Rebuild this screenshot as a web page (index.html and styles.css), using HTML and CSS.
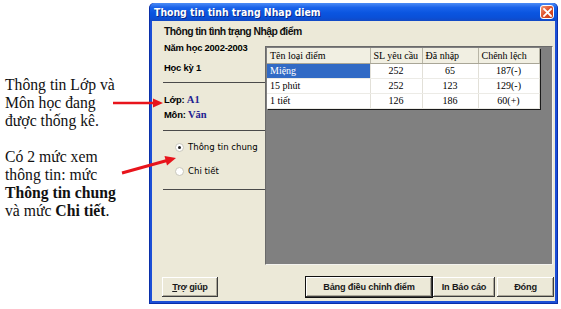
FILE: index.html
```html
<!DOCTYPE html>
<html lang="vi">
<head>
<meta charset="utf-8">
<title>Thong tin tinh trang Nhap diem</title>
<link rel="stylesheet" href="styles.css">
</head>
<body>
<div class="page">
  <div class="notes">
    <p class="note note-a">Thông tin Lớp và<br>Môn học đang<br>được thống kê.</p>
    <p class="note note-b">Có 2 mức xem<br>thông tin: mức<br><b>Thông tin chung</b><br>và mức <b>Chi tiết</b>.</p>
  </div>

  <div class="window">
    <div class="titlebar">
      <span class="title">Thong tin tinh trang Nhap diem</span>
      <span class="close">
        <svg width="9" height="9" viewBox="0 0 9 9"><path d="M1 1L8 8M8 1L1 8" stroke="#fff" stroke-width="1.8" stroke-linecap="square"/></svg>
      </span>
    </div>
    <div class="client">
      <div class="heading">Thông tin tình trạng Nhập điểm</div>
      <div class="main">
        <div class="side">
          <div class="line year">Năm học 2002-2003</div>
          <div class="line term">Học kỳ 1</div>
          <div class="sep sep1"></div>
          <div class="line cls">Lớp: <span class="val">A1</span></div>
          <div class="line subj">Môn: <span class="val">Văn</span></div>
          <div class="sep sep2"></div>
          <div class="radio r1"><span class="dot on"></span>Thông tin chung</div>
          <div class="radio r2"><span class="dot"></span>Chi tiết</div>
          <div class="sep sep3"></div>
        </div>
        <div class="grid">
          <table class="tbl">
            <colgroup><col class="c1"><col class="c2"><col class="c3"><col class="c4"></colgroup>
            <thead>
              <tr><th>Tên loại điểm</th><th>SL yêu cầu</th><th>Đã nhập</th><th>Chênh lệch</th></tr>
            </thead>
            <tbody>
              <tr><td class="sel">Miệng</td><td>252</td><td>65</td><td>187(-)</td></tr>
              <tr><td>15 phút</td><td>252</td><td>123</td><td>129(-)</td></tr>
              <tr><td>1 tiết</td><td>126</td><td>186</td><td>60(+)</td></tr>
            </tbody>
          </table>
        </div>
      </div>
      <div class="buttons">
        <button class="btn help"><u>T</u>rợ giúp</button>
        <span class="spacer"></span>
        <button class="btn def adjust">Bảng điều chỉnh điểm</button>
        <button class="btn report">In Báo cáo</button>
        <button class="btn closebtn">Đón<u>g</u></button>
      </div>
    </div>
  </div>

  <svg class="arrows" width="561" height="309" viewBox="0 0 561 309">
    <line x1="113" y1="103" x2="154" y2="103" stroke="#e8141c" stroke-width="2.5"/>
    <polygon points="163,103 153,98.5 153,107.5" fill="#e8141c"/>
    <line x1="122" y1="173" x2="167" y2="160.5" stroke="#e8141c" stroke-width="3"/>
    <polygon points="176,158 164.5,156 167,165.5" fill="#e8141c"/>
  </svg>
</div>
</body>
</html>
```

FILE: styles.css
```css
* { box-sizing: border-box; }
html, body { margin: 0; padding: 0; background: #fff; }
.page {
  position: relative;
  width: 561px;
  height: 309px;
  display: flex;
  align-items: flex-start;
  overflow: hidden;
}
.notes {
  width: 149px;
  flex: none;
  padding: 76px 0 0 5px;
  font-family: "Liberation Serif", "Times New Roman", serif;
  font-size: 15.7px;
  line-height: 18px;
  color: #111;
}
.note { margin: 0; }
.note-b { margin-top: 18px; }

.window {
  margin-top: 3px;
  width: 409px;
  height: 301px;
  flex: none;
  background: #1c4fd6;
  border: 1px solid #0a2fa8;
  border-top: none;
  border-radius: 5px 5px 0 0;
  display: flex;
  flex-direction: column;
  padding: 0 2px 2px 2px;
}
.titlebar {
  height: 18px;
  flex: none;
  margin: 0 -2px;
  padding: 0 3px 0 4px;
  border-radius: 5px 5px 0 0;
  background: linear-gradient(#4d8cf5 0%, #1a63ea 25%, #0a55e0 55%, #0a50d8 80%, #1349c4 100%);
  display: flex;
  align-items: center;
  justify-content: space-between;
}
.title {
  color: #fff;
  font-family: "DejaVu Sans Condensed", "DejaVu Sans", sans-serif;
  font-weight: bold;
  font-size: 10.4px;
  text-shadow: 1px 1px 0 #0a2a8a;
}
.close {
  width: 14px;
  height: 14px;
  border: 1px solid #fff;
  border-radius: 3px;
  background: linear-gradient(135deg, #f09a7c 0%, #e0542e 45%, #c63a18 100%);
  display: flex;
  align-items: center;
  justify-content: center;
}
.close svg { display: block; }

.client {
  flex: 1;
  background: #ece9d8;
  padding: 1px 1px 0 11px;
  display: flex;
  flex-direction: column;
  font-family: "Liberation Sans", Arial, sans-serif;
  font-size: 9px;
  color: #000;
}
.heading {
  height: 20px;
  line-height: 20px;
  margin-left: 1px;
  font-weight: bold;
  font-size: 10.4px;
  letter-spacing: -0.55px;
  color: #111;
}
.main {
  display: flex;
  height: 223px;
}
.side {
  width: 102px;
  flex: none;
  display: flex;
  flex-direction: column;
}
.line {
  height: 12px;
  line-height: 12px;
  font-weight: bold;
  margin-left: 1px;
  font-size: 9.4px;
  letter-spacing: -0.2px;
}
.val {
  font-family: "Liberation Serif", "Times New Roman", serif;
  font-weight: bold;
  font-size: 10.5px;
  letter-spacing: 0;
  color: #232391;
}
.term { margin-top: 8px; }
.sep { height: 1px; background: #4a4a4a; }
.sep1 { margin-top: 8px; }
.cls { margin-top: 11px; }
.subj { margin-top: 3px; }
.sep2 { margin-top: 9px; }
.radio {
  height: 12px;
  line-height: 12px;
  display: flex;
  align-items: center;
  margin-left: 12px;
  font-family: "DejaVu Sans Condensed", "DejaVu Sans", sans-serif;
  font-size: 9.5px;
}
.r1 { margin-top: 10px; }
.r2 { margin-top: 12px; }
.sep3 { margin-top: 12px; }
.dot {
  width: 9px;
  height: 9px;
  border-radius: 50%;
  background: #fff;
  border: 1px solid #c9c7bb;
  margin-right: 4px;
  display: flex;
  align-items: center;
  justify-content: center;
}
.dot.on::after {
  content: "";
  width: 3px;
  height: 3px;
  border-radius: 50%;
  background: #222;
}

.grid {
  margin-top: 4px;
  width: 288px;
  height: 219px;
  background: #808080;
  border-top: 1px solid #6a6a6a;
  border-left: 1px solid #6a6a6a;
  border-right: 1px solid #f4f3ee;
  border-bottom: 1px solid #f4f3ee;
  padding: 1px;
}
.tbl {
  border-collapse: collapse;
  width: 272px;
  table-layout: fixed;
  font-family: "Liberation Serif", "Times New Roman", serif;
  font-size: 10px;
  background: #fff;
  box-shadow: 1px 1px 0 #1a1a1a;
}
.c1 { width: 103px; }
.c2 { width: 52px; }
.c3 { width: 56px; }
.c4 { width: 61px; }
.tbl th {
  height: 15px;
  padding: 0 3px;
  text-align: left;
  font-weight: normal;
  background: #f1efe2;
  border-right: 1px solid #b8b5a6;
  border-bottom: 1px solid #a9a697;
  white-space: nowrap;
}
.tbl td {
  height: 15px;
  padding: 0 3px;
  text-align: center;
  border-right: 1px solid #e2e0d8;
  border-bottom: 1px solid #ecebe6;
  white-space: nowrap;
}
.tbl td:first-child { text-align: left; }
.tbl td.sel { background: #316ac5; color: #fff; }

.buttons {
  margin-top: 12px;
  height: 20px;
  display: flex;
  gap: 1px;
}
.spacer { flex: 1; }
.btn {
  height: 20px;
  padding: 0;
  margin: 0;
  background: #ece9d8;
  border: none;
  box-shadow: inset -1px -1px 0 #3c3c3c, inset 1px 1px 0 #ffffff, inset -2px -2px 0 #aca899;
  font-family: "Liberation Sans", Arial, sans-serif;
  font-weight: bold;
  font-size: 9.2px;
  letter-spacing: -0.2px;
  color: #1a1a1a;
}
.btn u { text-decoration: underline; }
.help { width: 56px; margin-left: -1px; }
.adjust { width: 126px; }
.report { width: 62px; }
.closebtn { width: 57px; margin-left: 1px; }
.btn.def {
  box-shadow: 0 0 0 1px #111, inset -1px -1px 0 #3c3c3c, inset 1px 1px 0 #ffffff, inset -2px -2px 0 #aca899;
}

.arrows {
  position: absolute;
  left: 0;
  top: 0;
  pointer-events: none;
}
```
